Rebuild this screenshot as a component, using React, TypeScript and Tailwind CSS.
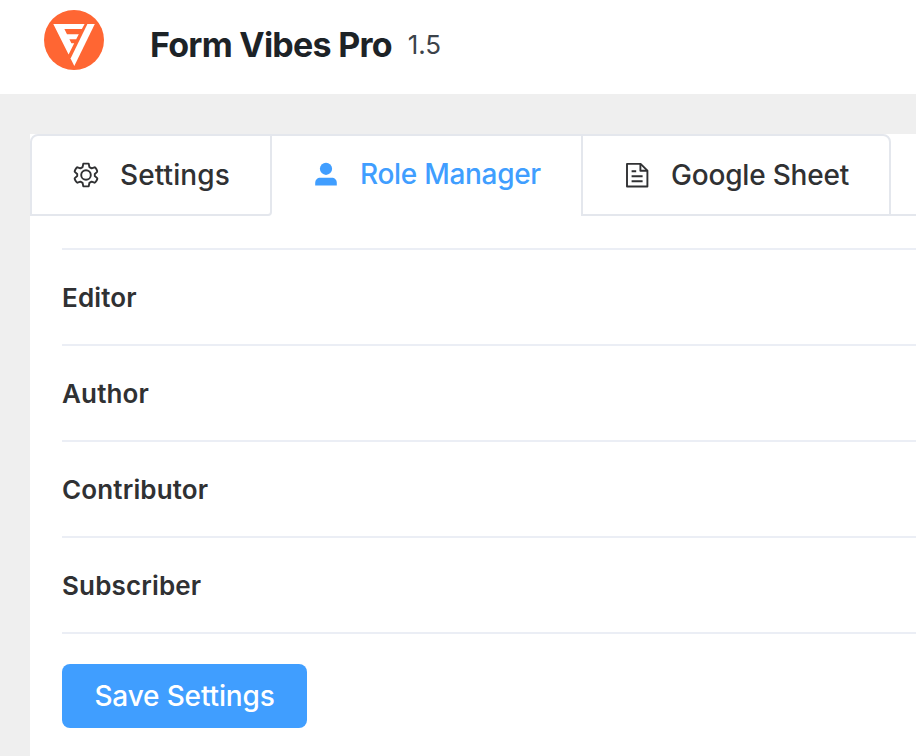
import { ReactNode } from "react";

function Logo() {
  return (
    <svg className="h-[60px] w-[60px] shrink-0" viewBox="0 0 60 60">
      <circle cx="30" cy="30" r="30" fill="#ff6633" />
      <path
        fill="#fff"
        d="M9.3 14H40.6L37.9 19H20.4L23 24.2H34.8L32.2 29.2H25.4L27.4 33.2H30.2L24.6 44.6L9.3 14Z"
      />
      <path fill="#fff" d="M43.4 14H50.8L30.3 56L26.6 48.4Z" />
    </svg>
  );
}

function GearIcon() {
  return (
    <svg
      className="h-7 w-7"
      viewBox="0 0 28 28"
      fill="none"
      stroke="currentColor"
      strokeWidth="1.9"
      strokeLinejoin="round"
    >
      <path d="M11.3 2.6h5.4l.7 3.5 2.2 1.3 2.9-1.1c.9-.3 3.4 4 2.7 4.6l-2.4 2.1v2l2.4 2.1c.7.6-1.8 4.9-2.7 4.6l-2.9-1.1-2.2 1.3-.7 3.5h-5.4l-.7-3.5-2.2-1.3-2.9 1.1c-.9.3-3.4-4-2.7-4.6l2.4-2.1v-2l-2.4-2.1c-.7-.6 1.8-4.9 2.7-4.6l2.9 1.1 2.2-1.3z" />
      <circle cx="14" cy="14" r="4.8" />
    </svg>
  );
}

function UserIcon() {
  return (
    <svg className="h-7 w-7" viewBox="0 0 28 28" fill="currentColor">
      <circle cx="14" cy="8.8" r="6.1" />
      <path d="M3.2 25.5v-2.4c0-3.3 2-5.3 5.3-5.3h11c3.3 0 5.3 2 5.3 5.3v2.4z" />
    </svg>
  );
}

function DocumentIcon() {
  return (
    <svg
      className="h-7 w-7"
      viewBox="0 0 28 28"
      fill="none"
      stroke="currentColor"
      strokeWidth="1.9"
      strokeLinejoin="round"
    >
      <path d="M4 2.9h13.6l6.8 6.8v15.8H4z" />
      <path d="M17.4 3v6.8h6.8M8.6 10.3h4.6M8.6 15.3h11M8.6 20.3h11" />
    </svg>
  );
}

interface TabProps {
  icon: ReactNode;
  label: string;
  className: string;
}

function Tab({ icon, label, className }: TabProps) {
  return (
    <button
      className={`flex shrink-0 items-center gap-5 whitespace-nowrap border-[#e4e7ed] pl-10 text-[28px] font-medium ${className}`}
    >
      {icon}
      <span>{label}</span>
    </button>
  );
}

const roles = ["Editor", "Author", "Contributor", "Subscriber"];

export default function App() {
  return (
    <div className="h-[756px] w-full overflow-hidden bg-[#efefef] font-['Inter',sans-serif] text-[#303133]">
      <header className="flex h-[94px] bg-white pl-11 pt-2.5">
        <Logo />
        <h1 className="ml-[46px] mt-[13px] text-[34px] leading-[44px] font-[650] tracking-[-0.75px] text-[#1d2327]">
          Form Vibes Pro
        </h1>
        <span className="ml-4 mt-[13px] text-[26px] leading-[44px] tracking-[-0.1px] text-[#3c434a]">
          1.5
        </span>
      </header>
      <main className="ml-[30px] mt-10 h-[622px] bg-white">
        <nav className="flex h-[82px]">
          <Tab
            icon={<GearIcon />}
            label="Settings"
            className="w-[242px] rounded-tl-lg rounded-br border-2 tracking-[0.1px]"
          />
          <Tab
            icon={<UserIcon />}
            label="Role Manager"
            className="w-[309px] border-t-2 pb-1 tracking-[-0.3px] text-[#409eff]"
          />
          <Tab
            icon={<DocumentIcon />}
            label="Google Sheet"
            className="w-[310px] rounded-tr-lg border-2 tracking-[-0.2px]"
          />
          <div className="flex-1 border-b-2 border-[#e4e7ed]" />
        </nav>
        <section className="pl-8 pt-8">
          <ul className="border-t-2 border-[#ebeef5]">
            {roles.map((role) => (
              <li
                key={role}
                className="flex h-24 items-center border-b-2 border-[#ebeef5] text-[26px] font-semibold tracking-[0.15px]"
              >
                {role}
              </li>
            ))}
          </ul>
          <button className="mt-[30px] h-16 w-[245px] rounded-lg bg-[#409eff] text-[28px] font-[550] tracking-[-0.15px] text-white">
            Save Settings
          </button>
        </section>
      </main>
    </div>
  );
}
